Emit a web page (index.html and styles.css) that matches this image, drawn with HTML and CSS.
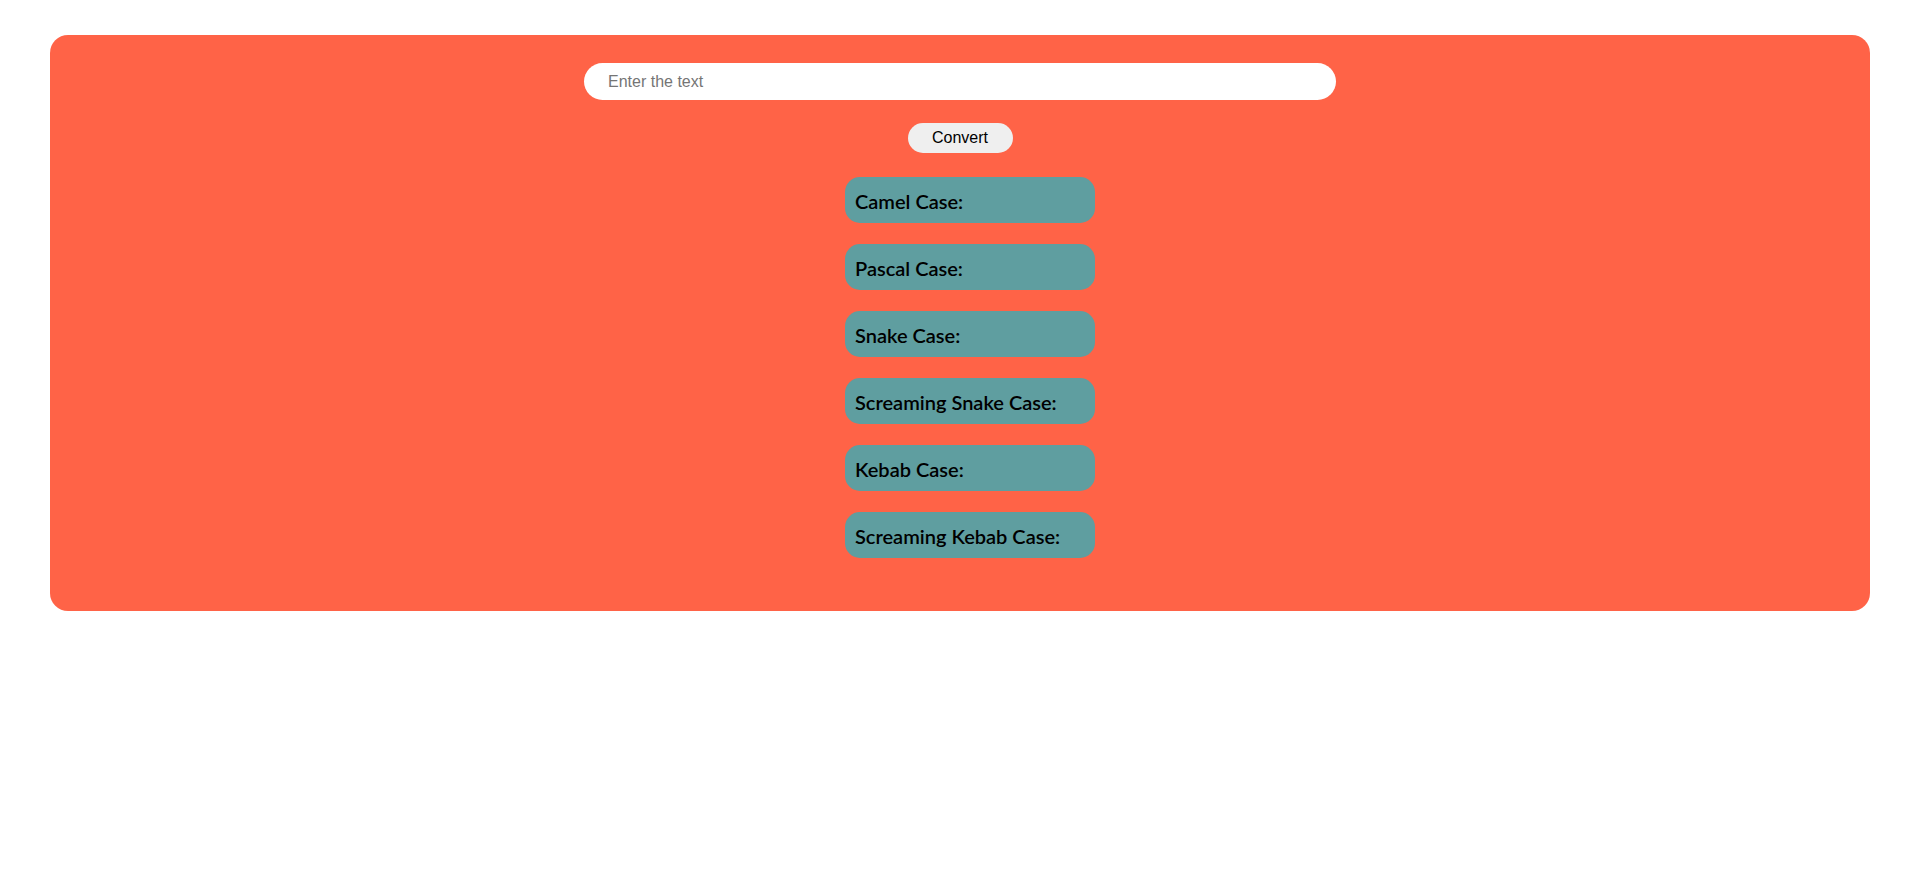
FILE: index.html
```html
<!DOCTYPE html>
<html lang="en">
<head>
<meta charset="utf-8">
<title>Case Converter</title>
<link rel="stylesheet" href="styles.css">
</head>
<body>
<main class="panel">
  <input class="text-input" type="text" placeholder="Enter the text">
  <button class="convert-btn" type="button">Convert</button>
  <div class="results">
    <div class="result">Camel Case:</div>
    <div class="result">Pascal Case:</div>
    <div class="result">Snake Case:</div>
    <div class="result">Screaming Snake Case:</div>
    <div class="result">Kebab Case:</div>
    <div class="result">Screaming Kebab Case:</div>
  </div>
</main>
</body>
</html>
```
FILE: styles.css
```css
html, body {
  margin: 0;
  padding: 0;
  background: #ffffff;
}

.panel {
  margin: 35px 36px 0 50px;
  height: 576px;
  box-sizing: border-box;
  background: #ff6347;
  border-radius: 18px;
  padding-top: 28px;
  display: flex;
  flex-direction: column;
  align-items: center;
}

.text-input {
  width: 752px;
  height: 37px;
  box-sizing: border-box;
  border: none;
  outline: none;
  border-radius: 19px;
  background: #ffffff;
  padding: 0 24px;
  font-family: "Liberation Sans", Arial, sans-serif;
  font-size: 16px;
  color: #000;
}

.text-input::placeholder {
  color: #757575;
}

.convert-btn {
  margin-top: 23px;
  width: 105px;
  height: 30px;
  border: none;
  border-radius: 15px;
  background: #efefef;
  font-family: "Liberation Sans", Arial, sans-serif;
  font-size: 16px;
  color: #000;
  padding: 0;
}

.results {
  margin-top: 24px;
  padding-left: 20px;
  display: flex;
  flex-direction: column;
  gap: 21px;
}

.result {
  width: 250px;
  height: 46px;
  box-sizing: border-box;
  background: #5f9ea0;
  border-radius: 15px;
  padding-left: 10px;
  display: flex;
  align-items: center;
  font-family: Lato, "Noto Sans", sans-serif;
  font-weight: 600;
  font-size: 20px;
  color: #000;
  padding-top: 2px;
}
```
